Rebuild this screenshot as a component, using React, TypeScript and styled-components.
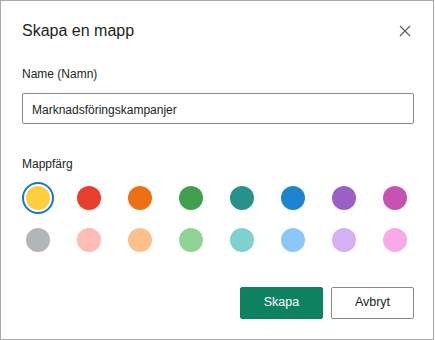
import React, { useState } from "react"
import styled, { createGlobalStyle } from "styled-components"

const Global = createGlobalStyle`
html, body {
  margin: 0;
  padding: 0;
  background: #ffffff;
}
* { box-sizing: border-box; }
`

const Dialog = styled.div`
width: 434px;
height: 340px;
border: 1px solid #a8a8a8;
background: #ffffff;
padding: 20px 19px 0 21px;
display: flex;
flex-flow: column nowrap;
font-family: "Liberation Sans", Arial, sans-serif;
color: #323130;
`

const Header = styled.div`
display: flex;
align-items: center;
justify-content: space-between;
height: 20px;
`

const Title = styled.h1`
margin: 0;
font-size: 16px;
font-weight: 400;
line-height: 20px;
color: #201f1e;
`

const CloseBtn = styled.button`
border: none;
background: none;
padding: 0;
width: 18px;
height: 18px;
display: flex;
align-items: center;
justify-content: center;
cursor: pointer;
`

const Label = styled.label<{ $top: number }>`
display: block;
margin-top: ${p => p.$top}px;
font-size: 12px;
line-height: 16px;
color: #201f1e;
`

const Input = styled.input`
margin-top: 11px;
width: 100%;
height: 31px;
border: 1px solid #8a8886;
border-radius: 2px;
padding: 3px 9px 0 9px;
font-family: "Liberation Sans", Arial, sans-serif;
font-size: 12px;
color: #201f1e;
outline: none;
`

const Swatches = styled.div`
margin-top: 10px;
display: grid;
grid-template-columns: repeat(8, 32px);
column-gap: 19px;
row-gap: 10px;
`

const Swatch = styled.button<{ $color: string; $selected: boolean }>`
width: 32px;
height: 32px;
padding: 0;
border-radius: 50%;
background: none;
display: flex;
align-items: center;
justify-content: center;
cursor: pointer;
border: 2px solid ${p => (p.$selected ? "#0f78d4" : "transparent")};
&::after {
  content: "";
  width: 24px;
  height: 24px;
  border-radius: 50%;
  background: ${p => p.$color};
}
`

const Footer = styled.div`
margin-top: 31px;
display: flex;
justify-content: flex-end;
gap: 8px;
`

const Btn = styled.button<{ $primary?: boolean }>`
width: 83px;
height: 32px;
border-radius: 2px;
font-family: "Liberation Sans", Arial, sans-serif;
font-size: 12.5px;
padding: 0 0 2px 0;
cursor: pointer;
border: 1px solid ${p => (p.$primary ? "#0f8163" : "#8a8886")};
background: ${p => (p.$primary ? "#0f8163" : "#ffffff")};
color: ${p => (p.$primary ? "#ffffff" : "#201f1e")};
`

const colors = [
  "#ffce3d", "#e83e2c", "#ee7014", "#40a04d", "#26928b", "#1e84d0", "#9a60c5", "#c852b1",
  "#b1b6b9", "#ffbcb4", "#ffc18b", "#8fd395", "#7ed1cd", "#8bc8f8", "#d5b0f3", "#f7aae6",
]

export default function App() {
  const [selected, setSelected] = useState(0)
  return (
    <>
      <Global />
      <Dialog>
        <Header>
          <Title>Skapa en mapp</Title>
          <CloseBtn aria-label="Stäng">
            <svg width="12" height="12" viewBox="0 0 12 12">
              <path d="M1 1 L11 11 M11 1 L1 11" stroke="#605e5c" strokeWidth="1.2" fill="none" />
            </svg>
          </CloseBtn>
        </Header>
        <Label $top={25}>Name (Namn)</Label>
        <Input defaultValue="Marknadsföringskampanjer" />
        <Label $top={32}>Mappfärg</Label>
        <Swatches>
          {colors.map((c, i) => (
            <Swatch key={c} $color={c} $selected={i === selected} onClick={() => setSelected(i)} />
          ))}
        </Swatches>
        <Footer>
          <Btn $primary>Skapa</Btn>
          <Btn>Avbryt</Btn>
        </Footer>
      </Dialog>
    </>
  )
}
